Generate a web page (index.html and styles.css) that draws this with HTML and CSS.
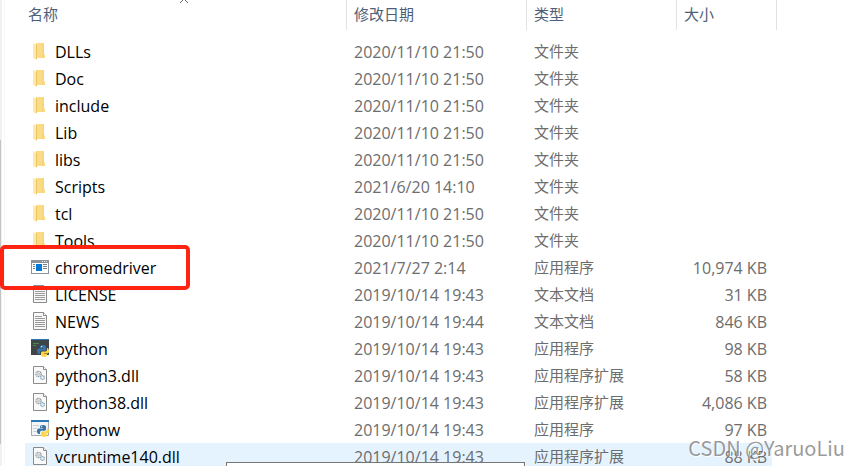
FILE: index.html
```html
<!DOCTYPE html>
<html lang="zh-CN">
<head>
  <meta charset="UTF-8">
  <title>Python38</title>
  <link rel="stylesheet" href="styles.css">
</head>
<body>

  <svg class="defs" aria-hidden="true">
    <symbol id="folder" viewBox="0 0 18 18">
      <path fill="#f3d078" d="M5 1h8v15H5z"/>
      <path fill="#fbdc86" d="M6 1h7v11l1 1v3H6z"/>
      <path fill="#f6d57c" d="M11 1h2v15h-2z"/>
      <path fill="#ffe9a9" d="M2 1l4 2v15l-4-2z"/>
      <path fill="#eac568" d="M5 3h1v14H5z"/>
    </symbol>
    <symbol id="app" viewBox="0 0 18 18">
      <path fill="#8c9399" d="M0 2h18v14H0z"/>
      <path fill="#fff" d="M1 5h16v10H1z"/>
      <path fill="#e4e7e9" d="M11 3h1v1h-1zM13 3h1v1h-1zM15 3h1v1h-1z"/>
      <path fill="#0078d7" d="M5 6h6v7H5z"/>
      <path fill="#78828b" d="M2 6h2v1H2zM2 8h2v1H2zM2 10h2v1H2zM12 6h4v1h-4zM12 8h4v1h-4zM12 10h4v1h-4z"/>
    </symbol>
    <symbol id="text" viewBox="0 0 18 18">
      <path fill="#f8f8f8" stroke="#8b8b8b" d="M2.500.5h10l3 3v14h-13z"/>
      <path fill="#fff" stroke="#8b8b8b" d="M12.500.5v3h3"/>
      <path stroke="#9a9a9a" d="M4 4.500h7M4 6.500h10M4 8.500h10M4 10.500h10M4 12.500h10M4 14.500h10"/>
    </symbol>
    <symbol id="dll" viewBox="0 0 18 18">
      <path fill="#fafafa" stroke="#8b8b8b" d="M2.500.5h10l3 3v14h-13z"/>
      <path fill="#fff" stroke="#8b8b8b" d="M12.500.5v3h3"/>
      <circle cx="7.500" cy="8" r="2.600" fill="none" stroke="#959b9f" stroke-width="1.400" stroke-dasharray="1.200 .5"/>
      <circle cx="7.500" cy="8" r="1" fill="none" stroke="#959b9f" stroke-width=".6"/>
      <circle cx="11.500" cy="11.500" r="1.800" fill="none" stroke="#7da4bd" stroke-width="1.300" stroke-dasharray="1.200 .5"/>
    </symbol>
    <symbol id="snakes" viewBox="0 0 12 12">
      <path fill="#3874a5" d="M6 0C3.500 0 3 .8 3 2v1h3v.6H2C.6 3.600 0 4.600 0 6.200S.7 9 2 9h1V7.400C3 6.200 3.700 5.700 5 5.700h2.500c1 0 1.500-.6 1.500-1.500V2C9 .7 8 0 6 0z"/>
      <path fill="#ffd644" d="M10 3v1.600C10 6 9.200 6.600 8 6.600H5.500C4.500 6.600 4 7.200 4 8v2c0 1.300 1 2 3 2s3-.8 3-2V9H7v-.5h3.500C11.600 8.500 12 7.500 12 6s-.7-3-2-3z"/>
      <circle cx="4.600" cy="1.700" r=".6" fill="#fff"/>
    </symbol>
    <symbol id="python" viewBox="0 0 18 18">
      <path fill="#3f4547" d="M0 1h18v15H0z"/>
      <path fill="#2b78b6" d="M0 0h18v1H0z"/>
      <path stroke="#3d8b45" d="M2 4.500h6M2 6.500h3"/>
      <use href="#snakes" x="6" y="6" width="12" height="12"/>
    </symbol>
    <symbol id="pythonw" viewBox="0 0 18 18">
      <path fill="#f4f5f6" stroke="#a6abae" d="M.5 1.500h17v14H.5z"/>
      <path fill="#2b78b6" d="M0 0h18v2H0z"/>
      <path stroke="#cdd1d3" d="M2 5.500h6M2 8.500h4M2 11.500h4"/>
      <use href="#snakes" x="6" y="5" width="12" height="12"/>
    </symbol>
  </svg>

  <div class="explorer">
    <div class="rail"><div class="thumb"></div></div>

    <table class="files">
      <thead>
        <tr>
          <th class="col-name" aria-sort="ascending">
            <button>名称</button>
            <svg class="caret" viewBox="0 0 10 6"><path fill="none" stroke="#666" d="M1 5l4-4 4 4"/></svg>
          </th>
          <th class="col-date"><button>修改日期</button></th>
          <th class="col-type"><button>类型</button></th>
          <th class="col-size"><button>大小</button></th>
        </tr>
      </thead>
      <tbody>
        <tr><td><svg><use href="#folder"/></svg>DLLs</td><td>2020/11/10 21:50</td><td>文件夹</td><td></td></tr>
        <tr><td><svg><use href="#folder"/></svg>Doc</td><td>2020/11/10 21:50</td><td>文件夹</td><td></td></tr>
        <tr><td><svg><use href="#folder"/></svg>include</td><td>2020/11/10 21:50</td><td>文件夹</td><td></td></tr>
        <tr><td><svg><use href="#folder"/></svg>Lib</td><td>2020/11/10 21:50</td><td>文件夹</td><td></td></tr>
        <tr><td><svg><use href="#folder"/></svg>libs</td><td>2020/11/10 21:50</td><td>文件夹</td><td></td></tr>
        <tr><td><svg><use href="#folder"/></svg>Scripts</td><td>2021/6/20 14:10</td><td>文件夹</td><td></td></tr>
        <tr><td><svg><use href="#folder"/></svg>tcl</td><td>2020/11/10 21:50</td><td>文件夹</td><td></td></tr>
        <tr><td><svg><use href="#folder"/></svg>Tools</td><td>2020/11/10 21:50</td><td>文件夹</td><td></td></tr>
        <tr><td class="marked"><svg><use href="#app"/></svg>chromedriver</td><td>2021/7/27 2:14</td><td>应用程序</td><td>10,974 KB</td></tr>
        <tr><td><svg><use href="#text"/></svg>LICENSE</td><td>2019/10/14 19:43</td><td>文本文档</td><td>31 KB</td></tr>
        <tr><td><svg><use href="#text"/></svg>NEWS</td><td>2019/10/14 19:44</td><td>文本文档</td><td>846 KB</td></tr>
        <tr><td><svg><use href="#python"/></svg>python</td><td>2019/10/14 19:43</td><td>应用程序</td><td>98 KB</td></tr>
        <tr><td><svg><use href="#dll"/></svg>python3.dll</td><td>2019/10/14 19:43</td><td>应用程序扩展</td><td>58 KB</td></tr>
        <tr><td><svg><use href="#dll"/></svg>python38.dll</td><td>2019/10/14 19:43</td><td>应用程序扩展</td><td>4,086 KB</td></tr>
        <tr><td><svg><use href="#pythonw"/></svg>pythonw</td><td>2019/10/14 19:43</td><td>应用程序</td><td>97 KB</td></tr>
        <tr class="hover"><td><svg><use href="#dll"/></svg>vcruntime140.dll</td><td>2019/10/14 19:43</td><td>应用程序扩展</td><td>88 KB</td></tr>
      </tbody>
    </table>

    <div class="tooltip"></div>
    <div class="watermark">CSDN @YaruoLiu</div>
  </div>

</body>
</html>
```
FILE: styles.css
```css
*,
*::after { box-sizing: border-box; }

body {
  margin: 0;
  background: #fff;
  font-family: "Open Sans", "Noto Sans CJK SC", sans-serif;
  font-size: 16px;
  color: #6d6d6d;
}

.defs {
  position: absolute;
  width: 0;
  height: 0;
}

.explorer {
  position: relative;
  display: flex;
  height: 100vh;
  overflow: hidden;
}

/* edge of the navigation pane */
.rail {
  flex: none;
  width: 5px;
  height: 100%;
  padding-top: 140px;
  border-right: 1px solid #f7f7f7;
  background: linear-gradient(to right, #f0f0f0 2px, #fff 2px);
}

.thumb {
  width: 1px;
  height: 304px;
  background: #c4c4c4;
}

.files {
  flex: 1;
  align-self: flex-start;
  margin: 0 82px 0 20px;
  border-spacing: 0;
  table-layout: fixed;
}

.col-date { width: 180px; }
.col-type { width: 150px; }
.col-size { width: 100px; }

th {
  position: relative;
  height: 30px;
  padding: 0;
  border-right: 1px solid #e2e2e2;
  text-align: left;
}

th button {
  display: block;
  width: 100%;
  height: 30px;
  padding: 0 7px 2px;
  border: none;
  background: none;
  font-family: "Noto Sans CJK SC", sans-serif;
  font-size: 15px;
  line-height: 28px;
  text-align: left;
  color: #4c607a;
}

.col-name button { padding-left: 3px; }

.caret {
  position: absolute;
  top: -2px;
  left: 50%;
  width: 10px;
  height: 6px;
  margin-left: -7px;
}

tbody::before {
  content: "";
  display: block;
  height: 8px;
}

td {
  height: 27px;
  padding: 2px 7px 0;
  line-height: 25px;
  white-space: nowrap;
  vertical-align: top;
}

td:first-child {
  padding-left: 6px;
  color: #000;
}

td:nth-child(3) {
  padding-top: 0;
  font-family: "Noto Sans CJK SC", sans-serif;
  font-size: 15px;
}

td:last-child {
  padding-right: 10px;
  text-align: right;
}

td svg {
  width: 18px;
  height: 18px;
  margin-right: 6px;
  vertical-align: -2px;
}

.hover td { background: #e5f3ff; }

.hover td:last-child {
  background: linear-gradient(to left, #fff 5px, #e5f3ff 5px);
}

/* red frame round the driver */
.marked { position: relative; }

.marked::after {
  content: "";
  position: absolute;
  top: -9px;
  left: -25px;
  width: 190px;
  height: 45px;
  border: 4px solid #ff2412;
  border-radius: 5px;
}

.tooltip {
  position: absolute;
  left: 226px;
  bottom: 0;
  width: 299px;
  height: 4px;
  border: 1px solid #767676;
  border-bottom: none;
  background: #fff;
}

.watermark {
  position: absolute;
  right: 14px;
  bottom: 4px;
  font-family: "Noto Sans CJK SC", sans-serif;
  font-size: 20px;
  line-height: 28px;
  color: rgba(110, 110, 110, 0.7);
  text-shadow: 1px 1px 0 #fff;
}
```
